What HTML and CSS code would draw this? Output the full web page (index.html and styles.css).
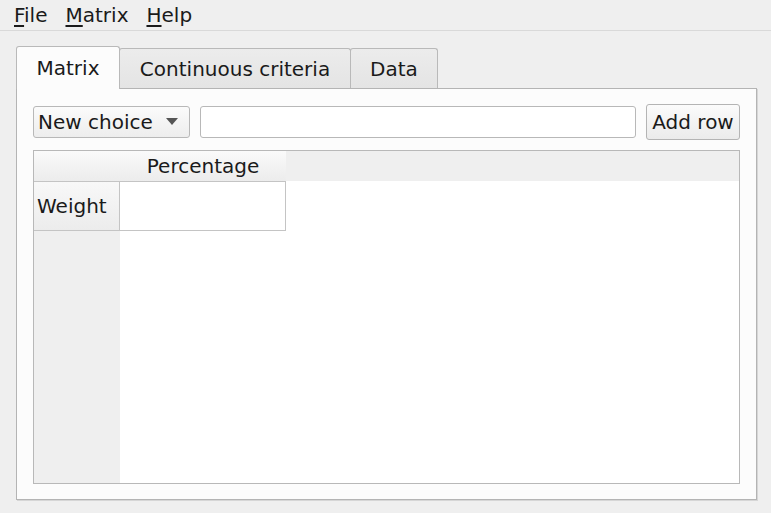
FILE: index.html
```html
<!DOCTYPE html>
<html>
<head>
<meta charset="utf-8">
<link rel="stylesheet" href="styles.css">
</head>
<body>
<div class="window">
  <div class="menubar">
    <span class="menu"><u>F</u>ile</span>
    <span class="menu"><u>M</u>atrix</span>
    <span class="menu"><u>H</u>elp</span>
  </div>
  <div class="main">
    <div class="tabs">
      <div class="tab active tab-matrix">Matrix</div>
      <div class="tab tab-criteria">Continuous criteria</div>
      <div class="tab tab-data">Data</div>
    </div>
    <div class="panel">
      <div class="toolbar">
        <div class="combo">
          <span>New choice</span>
          <svg class="arrow" width="12" height="7" viewBox="0 0 12 7"><path d="M0 0 L12 0 L6 7 Z" fill="#555"/></svg>
        </div>
        <div class="edit"></div>
        <div class="button">Add row</div>
      </div>
      <div class="table">
        <div class="hrow">
          <div class="corner"></div>
          <div class="hcell">Percentage</div>
          <div class="hfill"></div>
        </div>
        <div class="body">
          <div class="vhead">
            <div class="vcell">Weight</div>
          </div>
          <div class="cells">
            <div class="cell"></div>
          </div>
        </div>
      </div>
    </div>
  </div>
</div>
</body>
</html>
```
FILE: styles.css
```css
html, body {
  margin: 0;
  padding: 0;
}
body {
  background: #efefef;
  font-family: "DejaVu Sans", sans-serif;
  font-size: 20px;
  color: #1a1a1a;
  width: 771px;
  height: 513px;
  overflow: hidden;
}
.window {
  display: flex;
  flex-direction: column;
  height: 513px;
}
.menubar {
  box-sizing: border-box;
  height: 31px;
  border-bottom: 1px solid #d9d9d9;
  display: flex;
  align-items: center;
  padding-left: 5px;
}
.menu {
  padding: 0 9px;
  line-height: 30px;
}
.menu u {
  text-decoration-thickness: 2px;
  text-underline-offset: 3px;
}
.main {
  padding: 15px 14px 0 16px;
}
.tabs {
  display: flex;
  align-items: flex-end;
  height: 42px;
  position: relative;
  z-index: 1;
}
.tab {
  box-sizing: border-box;
  height: 40px;
  border: 1px solid #b9b9b9;
  border-bottom: none;
  border-radius: 3px 3px 0 0;
  background: linear-gradient(#ececec, #e4e4e4);
  display: flex;
  align-items: center;
  justify-content: center;
  margin-left: -1px;
}
.tab-matrix {
  width: 104px;
  margin-left: 0;
}
.tab-criteria {
  width: 232px;
}
.tab-data {
  width: 88px;
}
.tab.active {
  height: 43px;
  background: #fcfcfc;
  margin-bottom: -1px;
  position: relative;
  z-index: 2;
}
.panel {
  box-sizing: border-box;
  height: 412px;
  border: 1px solid #b4b4b4;
  box-shadow: 1px 1px 0 #d6d6d6;
  background: #fcfcfc;
  padding: 15px 16px 15px 16px;
  display: flex;
  flex-direction: column;
  gap: 11px;
}
.toolbar {
  display: flex;
  align-items: center;
  gap: 10px;
  height: 35px;
}
.combo {
  box-sizing: border-box;
  width: 157px;
  height: 32px;
  border: 1px solid #b8b8b8;
  border-radius: 3px;
  background: linear-gradient(#fbfbfb, #ededed);
  display: flex;
  align-items: center;
  justify-content: space-between;
  padding: 0 11px 0 4px;
}
.arrow {
  display: block;
}
.edit {
  box-sizing: border-box;
  width: 436px;
  height: 32px;
  border: 1px solid #b8b8b8;
  border-radius: 3px;
  background: #ffffff;
}
.button {
  box-sizing: border-box;
  width: 94px;
  height: 36px;
  border: 1px solid #b4b4b4;
  border-radius: 3px;
  background: linear-gradient(#fbfbfb, #ebebeb);
  display: flex;
  align-items: center;
  justify-content: center;
}
.table {
  box-sizing: border-box;
  flex: 1;
  border: 1px solid #b8b8b8;
  background: #ffffff;
  display: flex;
  flex-direction: column;
}
.hrow {
  display: flex;
  height: 30px;
}
.corner {
  width: 86px;
  background: linear-gradient(#fafafa, #ececec);
}
.hcell {
  width: 166px;
  background: linear-gradient(#fafafa, #ececec);
  display: flex;
  align-items: center;
  justify-content: center;
}
.hfill {
  flex: 1;
  background: #efefef;
}
.body {
  flex: 1;
  display: flex;
}
.vhead {
  width: 86px;
  background: #efefef;
}
.vcell {
  box-sizing: border-box;
  height: 50px;
  border-top: 1px solid #c4c4c4;
  border-bottom: 1px solid #c4c4c4;
  border-right: 1px solid #c4c4c4;
  background: linear-gradient(#f8f8f8, #ececec);
  display: flex;
  align-items: center;
  padding-left: 3px;
}
.cells {
  flex: 1;
}
.cell {
  box-sizing: border-box;
  width: 166px;
  height: 50px;
  border-top: 1px solid #c4c4c4;
  border-right: 1px solid #c4c4c4;
  border-bottom: 1px solid #c4c4c4;
  background: #ffffff;
}
```
